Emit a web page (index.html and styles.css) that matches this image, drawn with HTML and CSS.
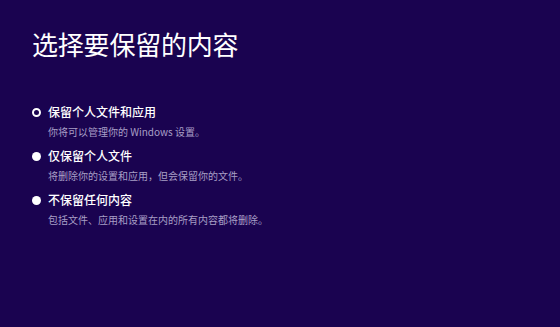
FILE: index.html
```html
<!DOCTYPE html>
<html lang="zh-CN">
<head>
    <meta charset="UTF-8">
    <title>选择要保留的内容</title>
    <link rel="stylesheet" href="styles.css">
</head>
<body>
    <div class="page">
        <h1 class="title">选择要保留的内容</h1>

        <ul class="options">
            <li class="option">
                <div class="option-head">
                    <span class="radio radio-ring"></span>
                    <span class="option-name">保留个人文件和应用</span>
                </div>
                <p class="option-desc">你将可以管理你的 Windows 设置。</p>
            </li>
            <li class="option">
                <div class="option-head">
                    <span class="radio"></span>
                    <span class="option-name">仅保留个人文件</span>
                </div>
                <p class="option-desc">将删除你的设置和应用，但会保留你的文件。</p>
            </li>
            <li class="option">
                <div class="option-head">
                    <span class="radio"></span>
                    <span class="option-name">不保留任何内容</span>
                </div>
                <p class="option-desc">包括文件、应用和设置在内的所有内容都将删除。</p>
            </li>
        </ul>
    </div>
</body>
</html>
```

FILE: styles.css
```css
/* Fondo morado de la pantalla de restablecimiento */
body {
    margin: 0;
    overflow: hidden;
    background-color: #1a0350;
    color: #ffffff;
    font-family: "Noto Sans CJK SC", "Noto Sans", sans-serif;
}

.page {
    padding: 29px 0 0 32px;
}

/* Titulo principal */
.title {
    margin: 0;
    font-size: 26px;
    line-height: 30px;
    font-weight: 400;
    letter-spacing: -0.2px;
}

/* Lista de opciones */
.options {
    list-style: none;
    margin: 44px 0 0 0;
    padding: 0;
    display: flex;
    flex-direction: column;
    gap: 8px;
}

.option-head {
    display: flex;
    align-items: center;
    gap: 7px;
    height: 18px;
}

.option-name {
    font-size: 12px;
    line-height: 18px;
    font-weight: 500;
}

/* Circulo del radio */
.radio {
    width: 9px;
    height: 9px;
    border-radius: 50%;
    background: #ffffff;
    box-sizing: border-box;
    flex-shrink: 0;
}

.radio-ring {
    background: transparent;
    border: 2px solid #ffffff;
}

.option-desc {
    margin: 4px 0 0 16px;
    font-size: 10px;
    line-height: 14px;
    color: #a89fc6;
}
```
